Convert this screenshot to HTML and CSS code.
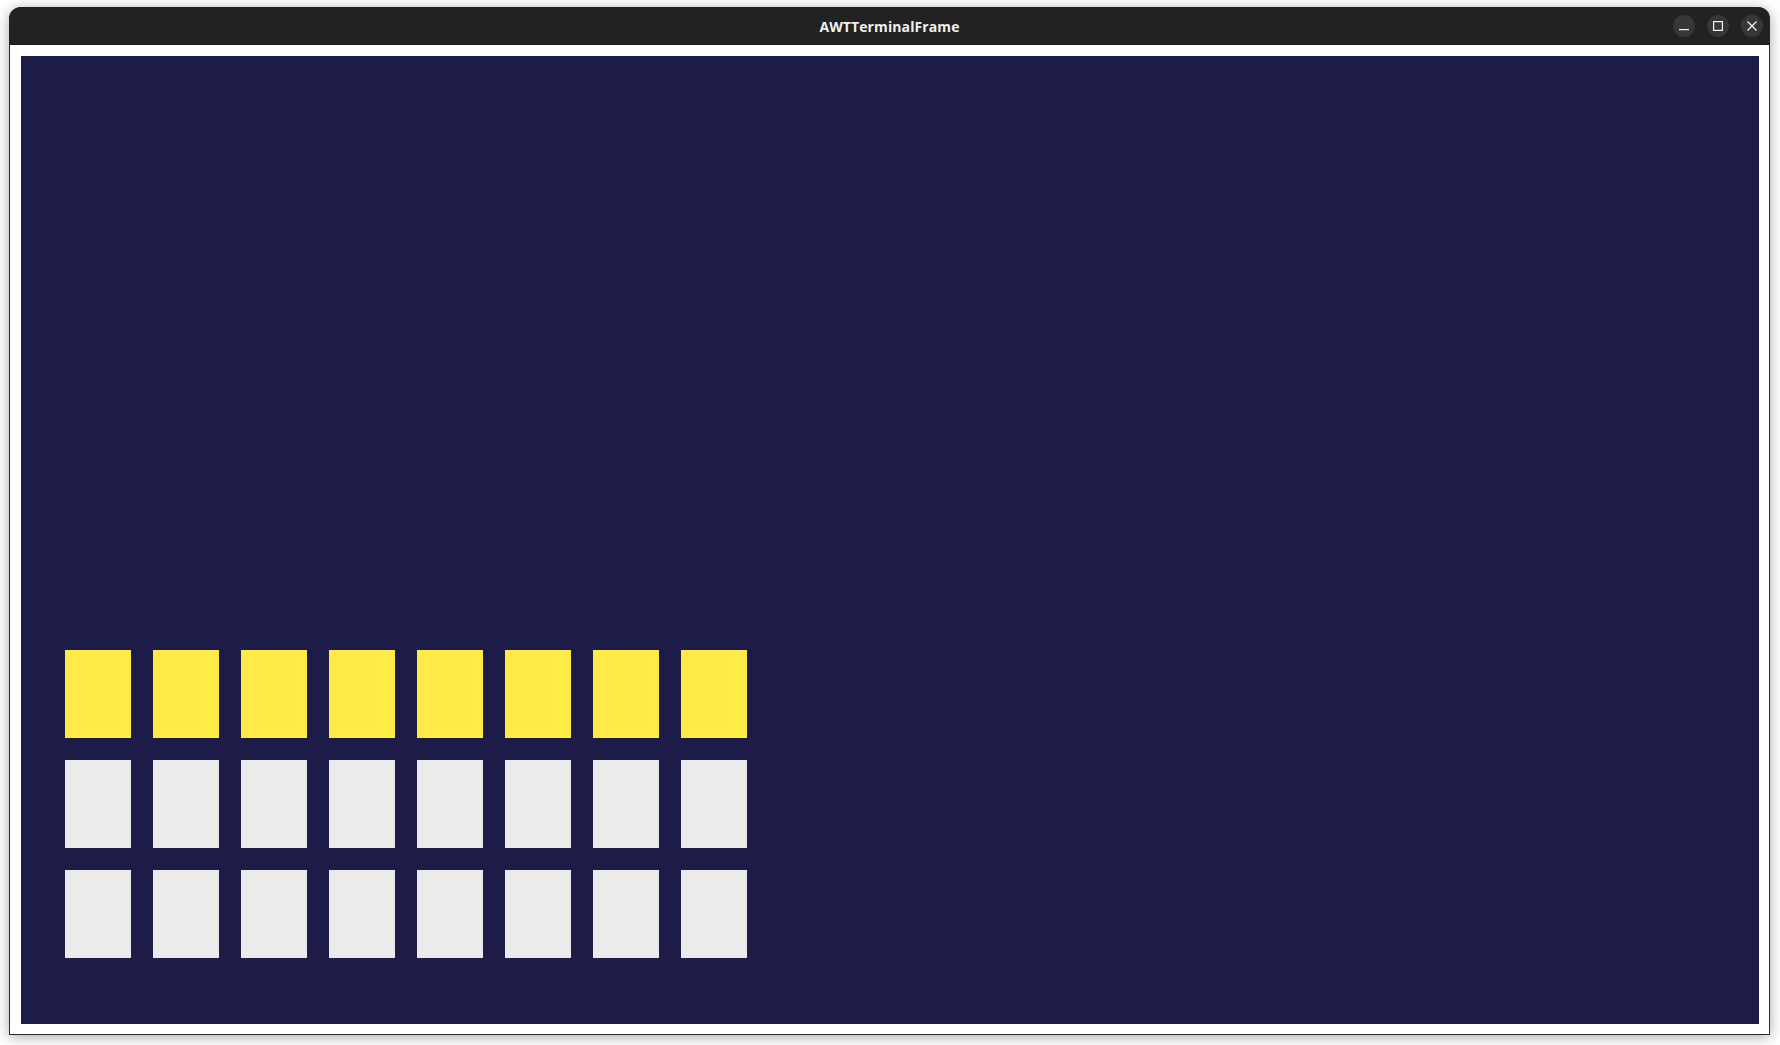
FILE: index.html
```html
<!DOCTYPE html>
<html>
<head>
<meta charset="utf-8">
<link rel="stylesheet" href="styles.css">
</head>
<body>
<div class="window">
  <div class="titlebar">
    <div class="title">AWTTerminalFrame</div>
    <div class="controls">
      <div class="btn"><svg width="12" height="12" viewBox="0 0 12 12"><rect x="1" y="9" width="10" height="1.2" fill="#f2f2f2"/></svg></div>
      <div class="btn"><svg width="12" height="12" viewBox="0 0 12 12"><rect x="1.6" y="1.6" width="8.8" height="8.8" fill="none" stroke="#f2f2f2" stroke-width="1.2"/></svg></div>
      <div class="btn"><svg width="12" height="12" viewBox="0 0 12 12"><path d="M1.5 1.5 L10.5 10.5 M10.5 1.5 L1.5 10.5" stroke="#f2f2f2" stroke-width="1.3"/></svg></div>
    </div>
  </div>
  <div class="content">
    <div class="panel">
      <div class="grid">
        <div class="cell y"></div><div class="cell y"></div><div class="cell y"></div><div class="cell y"></div>
        <div class="cell y"></div><div class="cell y"></div><div class="cell y"></div><div class="cell y"></div>
        <div class="cell g"></div><div class="cell g"></div><div class="cell g"></div><div class="cell g"></div>
        <div class="cell g"></div><div class="cell g"></div><div class="cell g"></div><div class="cell g"></div>
        <div class="cell g"></div><div class="cell g"></div><div class="cell g"></div><div class="cell g"></div>
        <div class="cell g"></div><div class="cell g"></div><div class="cell g"></div><div class="cell g"></div>
      </div>
    </div>
  </div>
</div>
</body>
</html>
```

FILE: styles.css
```css
html, body {
  margin: 0;
  padding: 0;
  background: #ffffff;
}
body {
  width: 1780px;
  height: 1045px;
  overflow: hidden;
  padding-top: 7px;
  padding-left: 9px;
  box-sizing: border-box;
  font-family: "Open Sans", "DejaVu Sans", sans-serif;
}
.window {
  width: 1761px;
  height: 1028px;
  display: flex;
  flex-direction: column;
  border-radius: 12px 12px 0 0;
  box-shadow: 0 2px 14px rgba(0,0,0,0.35);
  background: #2b2b2b;
  overflow: hidden;
}
.titlebar {
  height: 38px;
  flex: none;
  background: #222222;
  position: relative;
  display: flex;
  align-items: center;
  justify-content: center;
  border-bottom: 1px solid #1a1a1a;
  box-sizing: border-box;
}
.title {
  color: #f0f0f0;
  font-weight: 700;
  font-size: 14px;
  letter-spacing: 0.1px;
  margin-top: 1px;
}
.controls {
  position: absolute;
  right: 7px;
  top: 8px;
  display: flex;
  gap: 12px;
}
.btn {
  width: 22px;
  height: 22px;
  border-radius: 50%;
  background: #373737;
  display: flex;
  align-items: center;
  justify-content: center;
}
.content {
  flex: 1;
  margin: 0 1px 1px 1px;
  background: #ffffff;
  padding: 11px 10px 10px 11px;
  display: flex;
}
.panel {
  flex: 1;
  background: #1d1c48;
  padding: 594px 0 0 44px;
}
.grid {
  display: grid;
  grid-template-columns: repeat(8, 66px);
  grid-auto-rows: 88px;
  gap: 22px;
}
.y { background: #ffea47; }
.g { background: #ebebeb; }
```
